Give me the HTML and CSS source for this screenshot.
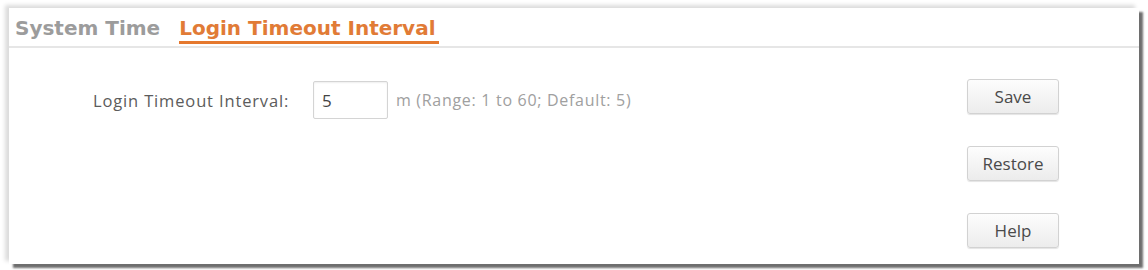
FILE: index.html
```html
<!DOCTYPE html>
<html>
<head>
<meta charset="utf-8">
<link rel="stylesheet" href="styles.css">
</head>
<body>
<div class="panel">
  <div class="tabs">
    <span class="tab">System Time</span>
    <span class="tab active">Login Timeout Interval</span>
  </div>
  <div class="content">
    <div class="form">
      <div class="row">
        <label class="label">Login Timeout Interval:</label>
        <input class="field" type="text" value="5">
        <span class="hint">m (Range: 1 to 60; Default: 5)</span>
      </div>
    </div>
    <div class="actions">
      <button class="btn">Save</button>
      <button class="btn">Restore</button>
      <button class="btn">Help</button>
    </div>
  </div>
</div>
</body>
</html>
```
FILE: styles.css
```css
html, body {
  margin: 0;
  padding: 0;
  background: #ffffff;
}
body {
  width: 1148px;
  height: 270px;
  overflow: hidden;
  font-family: "Open Sans", "DejaVu Sans", sans-serif;
}
.panel {
  margin: 8px 9px 0 9px;
  height: 256px;
  background: #fff;
  box-shadow: 4px 4px 2px #6e6e6e, -4px -3px 4px #dcdcdc;
  display: flex;
  flex-direction: column;
}
.tabs {
  height: 38px;
  border-bottom: 2px solid #e6e6e6;
  display: flex;
  align-items: flex-end;
  padding-left: 6px;
  gap: 16px;
}
.tab {
  font-family: "DejaVu Sans", sans-serif;
  font-weight: bold;
  font-size: 20px;
  color: #9c9c9c;
  line-height: 26px;
  margin-bottom: 2px;
  padding-right: 3px;
  border-bottom: 3px solid transparent;
}
.tab.active {
  color: #e17b36;
  border-bottom-color: #e5782e;
}
.content {
  flex: 1;
  display: flex;
  justify-content: space-between;
}
.form {
  padding: 33px 0 0 84px;
}
.row {
  display: flex;
  align-items: center;
}
.label {
  width: 220px;
  font-size: 16.5px;
  letter-spacing: 0.85px;
  color: #5c5c5c;
}
.field {
  width: 75px;
  height: 38px;
  box-sizing: border-box;
  border: 1px solid #d4d4d4;
  border-radius: 2px;
  padding: 0 0 0 8px;
  font-family: "Open Sans", sans-serif;
  font-size: 17px;
  color: #444;
  margin-right: 8px;
  box-shadow: inset 0 1px 2px #eee;
}
.hint {
  font-size: 16px;
  letter-spacing: 0.7px;
  color: #a0a0a0;
}
.actions {
  display: flex;
  flex-direction: column;
  gap: 32px;
  padding: 31px 80px 0 0;
}
.btn {
  width: 92px;
  height: 35px;
  border: 1px solid #d2d2d2;
  border-radius: 3px;
  background: linear-gradient(#fdfdfd, #ececec);
  font-family: "Open Sans", sans-serif;
  font-size: 17px;
  color: #4a4a4a;
  box-shadow: 0 1px 1px #e4e4e4;
  padding: 0;
}
```
